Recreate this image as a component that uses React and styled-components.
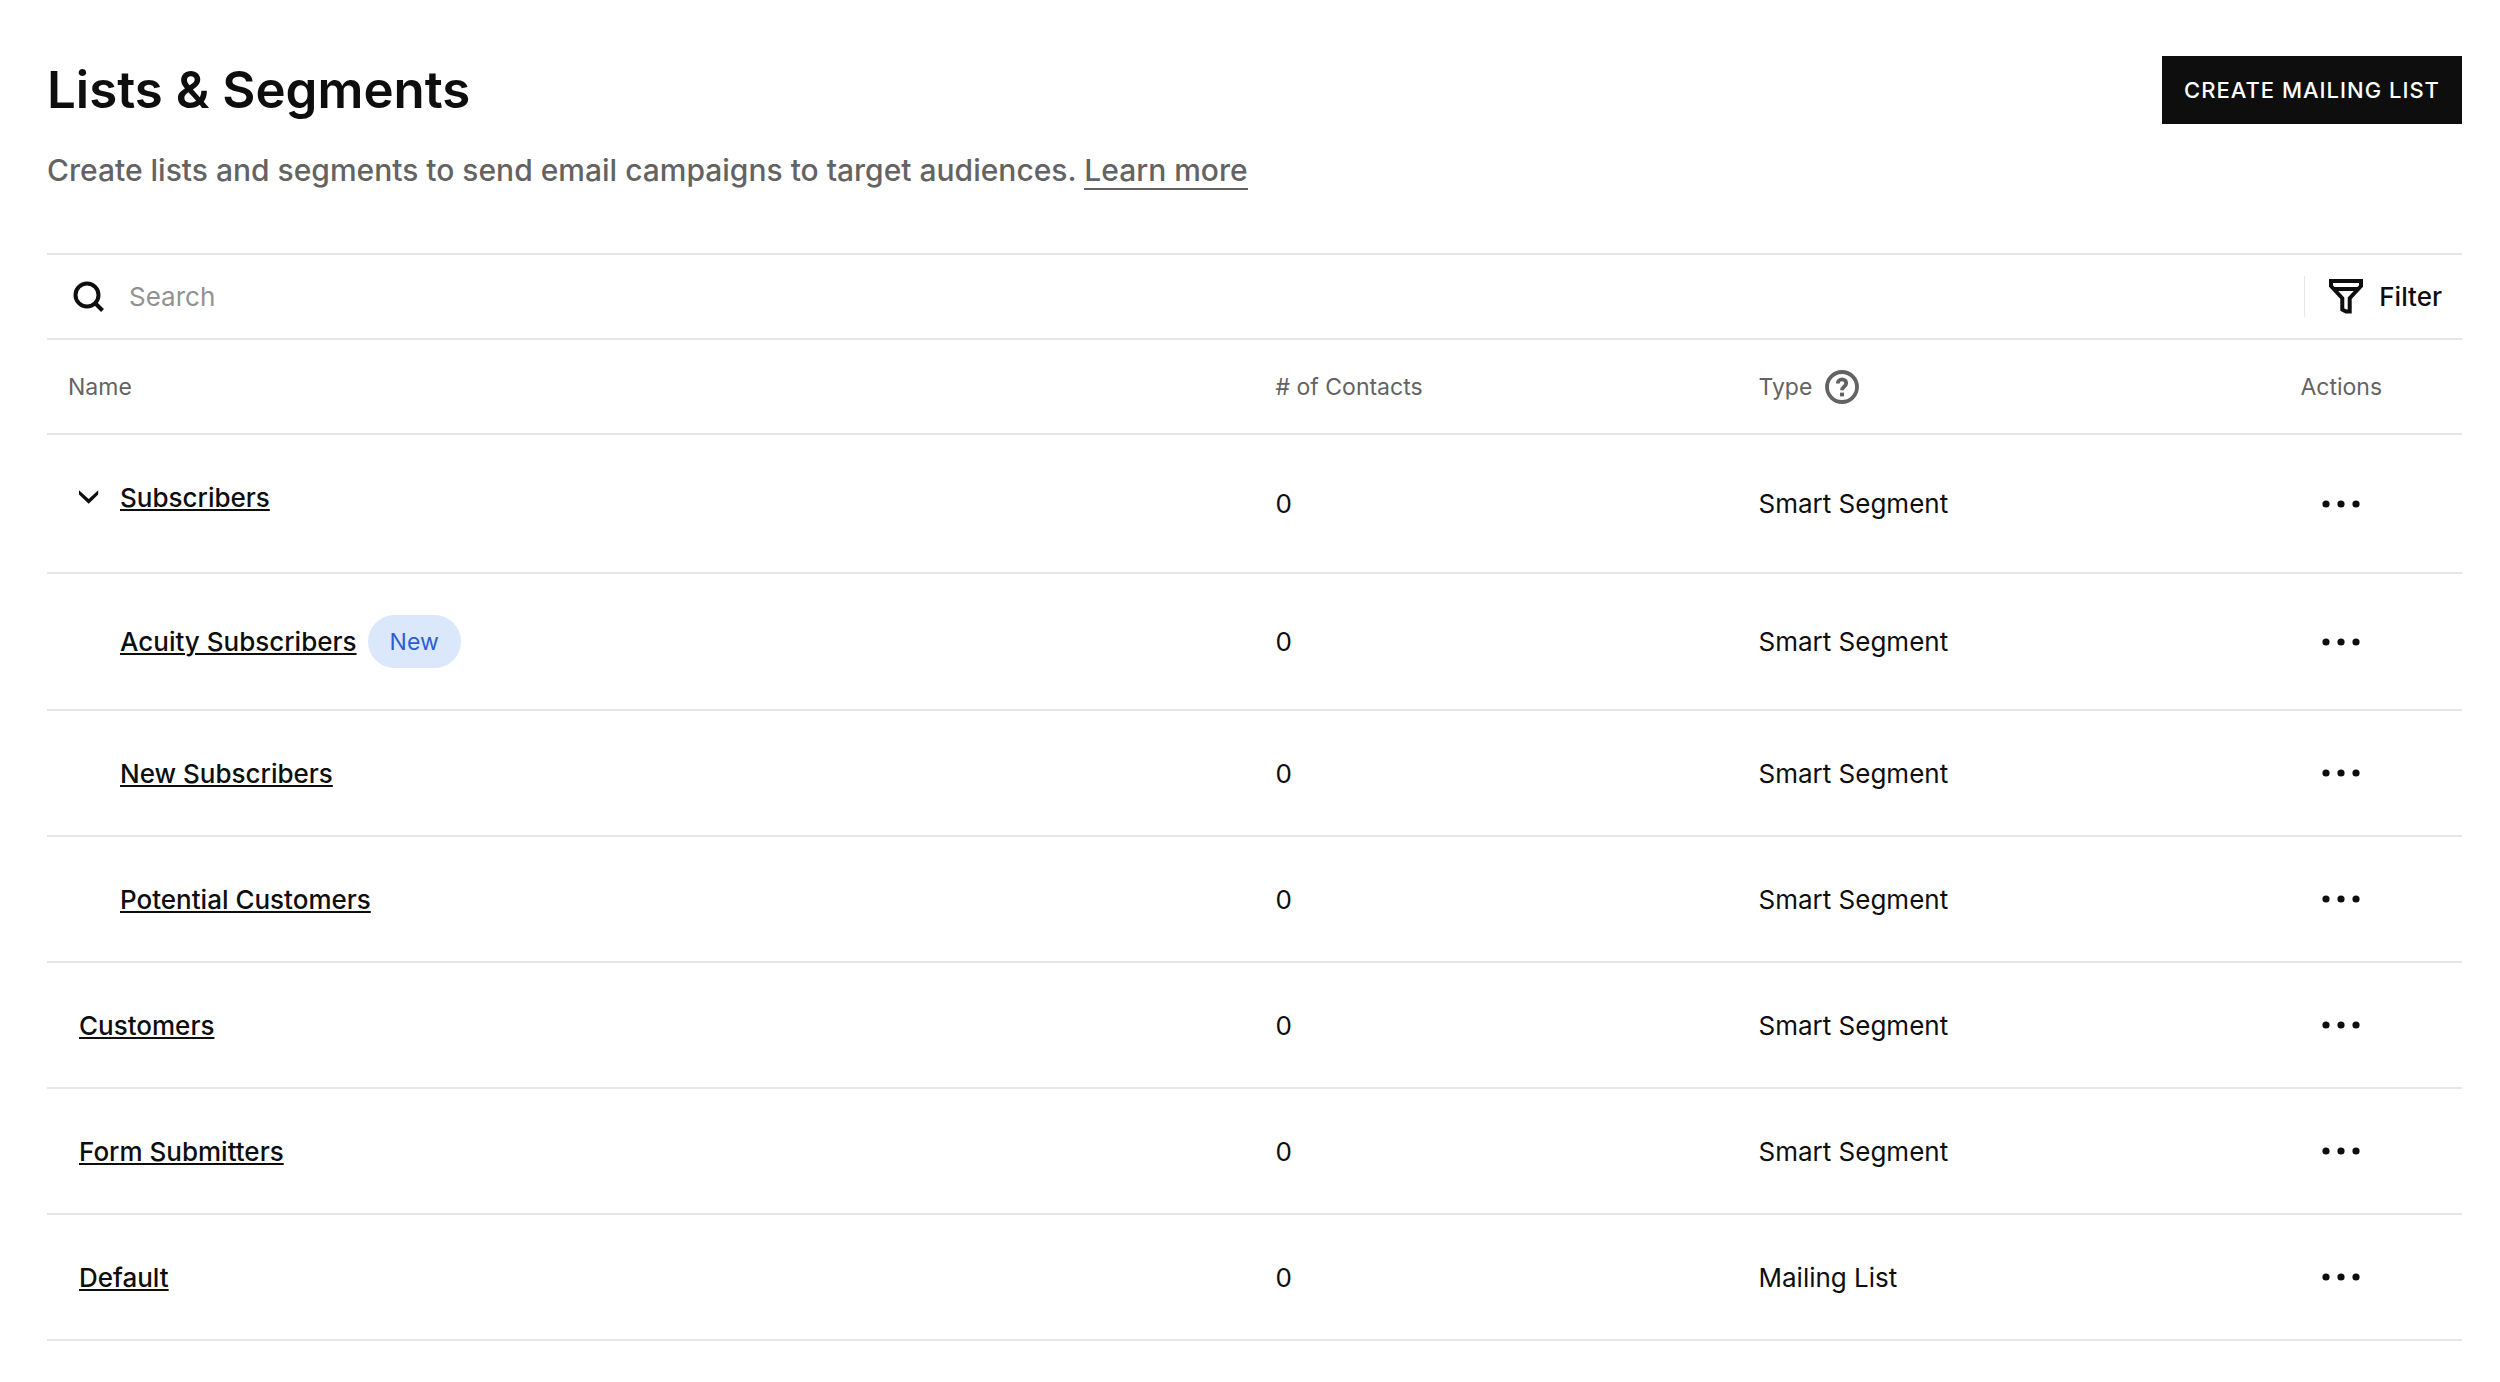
import React, { useState } from 'react';
import styled, { createGlobalStyle } from 'styled-components';

const segments = [
    { name: 'Subscribers', contacts: 0, type: 'Smart Segment', parent: true },
    { name: 'Acuity Subscribers', contacts: 0, type: 'Smart Segment', nested: true, isNew: true },
    { name: 'New Subscribers', contacts: 0, type: 'Smart Segment', nested: true },
    { name: 'Potential Customers', contacts: 0, type: 'Smart Segment', nested: true },
    { name: 'Customers', contacts: 0, type: 'Smart Segment' },
    { name: 'Form Submitters', contacts: 0, type: 'Smart Segment' },
    { name: 'Default', contacts: 0, type: 'Mailing List' },
];

function SearchGlyph() {
    return (
        <svg width="32" height="32" viewBox="0 0 32 32" fill="none" stroke="#0e0e0e" strokeWidth="4" aria-hidden="true">
            <circle cx="14" cy="14" r="11.5" />
            <path d="M22 22l7.5 7.5" />
        </svg>
    );
}

function FilterGlyph() {
    return (
        <svg width="34" height="35" viewBox="0 0 34 35" fill="none" stroke="#0e0e0e" strokeWidth="4" aria-hidden="true">
            <path d="M2 2h30v5L20.7 19.2v13.4h-3.6l-3.8-2V19.2L2 7z" />
            <path d="M4 10h26" />
        </svg>
    );
}

function HelpGlyph() {
    return (
        <svg width="34" height="34" viewBox="0 0 34 34" fill="none" stroke="#636363" strokeWidth="4" aria-hidden="true">
            <circle cx="17" cy="17" r="15" strokeWidth="3.8" />
            <path d="M12.8 13.6c0-2.6 1.7-4.2 4.2-4.2s4.2 1.6 4.2 3.9c0 3.4-4.2 3.3-4.2 7" strokeWidth="3.8" />
            <path d="M15 22.6h4v3.8h-4z" fill="#636363" stroke="none" />
        </svg>
    );
}

function ChevronGlyph() {
    return (
        <svg width="20" height="14" viewBox="0 0 20 14" aria-hidden="true">
            <path d="M0 0.2L9.7 9L19.2 0.2V4.6L9.7 13.8L0 4.6z" fill="#0e0e0e" />
        </svg>
    );
}

function DotsGlyph() {
    return (
        <svg width="38" height="8" viewBox="0 0 38 8" fill="#0e0e0e" aria-hidden="true">
            <circle cx="4" cy="4" r="3.6" />
            <circle cx="19" cy="4" r="3.6" />
            <circle cx="34" cy="4" r="3.6" />
        </svg>
    );
}

function App() {
    const [open, setOpen] = useState(true);
    const rows = segments.filter((segment) => open || !segment.nested);

    return (
        <Page>
            <GlobalStyle />
            <Header>
                <div>
                    <Title>Lists &amp; Segments</Title>
                    <Subtitle>
                        Create lists and segments to send email campaigns to target audiences.{' '}
                        <LearnMore href="#learn-more">Learn more</LearnMore>
                    </Subtitle>
                </div>
                <CreateButton type="button">Create mailing list</CreateButton>
            </Header>
            <Toolbar>
                <SearchLabel>
                    <SearchGlyph />
                    <SearchInput type="text" placeholder="Search" aria-label="Search" />
                </SearchLabel>
                <FilterButton type="button">
                    <FilterGlyph />
                    Filter
                </FilterButton>
            </Toolbar>
            <Table>
                <thead>
                    <tr>
                        <HeadCell $width="50%">Name</HeadCell>
                        <HeadCell $width="20%"># of Contacts</HeadCell>
                        <HeadCell $width="20%">
                            <TypeHead>
                                Type
                                <IconButton type="button" aria-label="About types">
                                    <HelpGlyph />
                                </IconButton>
                            </TypeHead>
                        </HeadCell>
                        <HeadCell $width="10%" $center>Actions</HeadCell>
                    </tr>
                </thead>
                <tbody>
                    {rows.map((segment) => (
                        <Row key={segment.name} $parent={segment.parent} $badge={segment.isNew}>
                            <Cell>
                                <NameBox $nested={segment.nested} $parent={segment.parent}>
                                    {segment.parent && (
                                        <IconButton
                                            type="button"
                                            aria-label="Toggle subscriber segments"
                                            aria-expanded={open}
                                            onClick={() => setOpen(!open)}
                                        >
                                            <ChevronGlyph />
                                        </IconButton>
                                    )}
                                    <NameLink href="#segment">{segment.name}</NameLink>
                                    {segment.isNew && <Badge>New</Badge>}
                                </NameBox>
                            </Cell>
                            <Cell>{segment.contacts}</Cell>
                            <Cell>{segment.type}</Cell>
                            <Cell $center>
                                <MenuButton type="button" aria-label={`Actions for ${segment.name}`}>
                                    <DotsGlyph />
                                </MenuButton>
                            </Cell>
                        </Row>
                    ))}
                </tbody>
            </Table>
        </Page>
    );
}

const GlobalStyle = createGlobalStyle`
    * {
        box-sizing: border-box;
    }

    body {
        margin: 0;
        background-color: #fff;
        color: #0e0e0e;
        font-family: Inter, "Liberation Sans", sans-serif;
    }

    button, input {
        font-family: inherit;
        color: inherit;
    }
`;

const Page = styled.main`
    padding: 56px 38px 40px 47px;
`;

const Header = styled.header`
    display: flex;
    align-items: flex-start;
    justify-content: space-between;
    padding-bottom: 63px;
`;

const Title = styled.h1`
    margin: 0;
    font-size: 51px;
    line-height: 68px;
    font-weight: 600;
`;

const Subtitle = styled.p`
    margin: 26px 0 0;
    font-size: 30px;
    line-height: 40px;
    font-weight: 500;
    color: #636363;
`;

const LearnMore = styled.a`
    color: inherit;
    text-decoration: none;
    border-bottom: 2px solid #636363;
`;

const CreateButton = styled.button`
    height: 68px;
    padding: 0 22px;
    border: none;
    background-color: #0e0e0e;
    color: #fff;
    font-size: 22px;
    font-weight: 500;
    letter-spacing: 1px;
    text-transform: uppercase;
    cursor: pointer;
`;

const Toolbar = styled.div`
    height: 87px;
    display: flex;
    align-items: center;
    border-top: 2px solid #e6e6e6;
    border-bottom: 2px solid #e6e6e6;
`;

const SearchLabel = styled.label`
    flex: 1;
    display: flex;
    align-items: center;
    gap: 24px;
    padding-left: 26px;
`;

const SearchInput = styled.input`
    flex: 1;
    height: 60px;
    padding: 0;
    border: none;
    outline: none;
    background: none;
    font-size: 26px;

    &::placeholder {
        color: #929292;
        opacity: 1;
    }
`;

const FilterButton = styled.button`
    height: 41px;
    display: flex;
    align-items: center;
    gap: 16px;
    padding: 0 20px 0 24px;
    border: none;
    border-left: 1px solid #e6e6e6;
    background: none;
    font-size: 26px;
    font-weight: 500;
    cursor: pointer;
`;

const Table = styled.table`
    width: 100%;
    table-layout: fixed;
    border-collapse: separate;
    border-spacing: 0;
`;

const HeadCell = styled.th`
    width: ${(props) => props.$width};
    height: 95px;
    padding: 0 21px;
    border-bottom: 2px solid #e6e6e6;
    color: #636363;
    font-size: 23px;
    font-weight: 400;
    text-align: ${(props) => (props.$center ? 'center' : 'left')};
`;

const TypeHead = styled.div`
    display: flex;
    align-items: center;
    gap: 13px;
`;

const Row = styled.tr`
    height: ${(props) => (props.$parent ? '139px' : props.$badge ? '137px' : '126px')};
`;

const Cell = styled.td`
    padding: 0 21px;
    border-bottom: 2px solid #e6e6e6;
    font-size: 26px;
    text-align: ${(props) => (props.$center ? 'center' : 'left')};
`;

const NameBox = styled.div`
    display: flex;
    align-items: center;
    padding-left: ${(props) => (props.$nested ? '52px' : '11px')};
    padding-bottom: ${(props) => (props.$parent ? '13px' : '0')};

    > button {
        margin-right: 21px;
    }
`;

const NameLink = styled.a`
    color: inherit;
    font-weight: 500;
    text-decoration: underline;
    text-decoration-thickness: 2px;
    text-underline-offset: 2px;
`;

const Badge = styled.span`
    height: 53px;
    display: flex;
    align-items: center;
    margin-left: 11px;
    padding: 0 22px;
    border-radius: 27px;
    background-color: #dbe7fb;
    color: #2a5fd3;
    font-size: 23px;
`;

const IconButton = styled.button`
    display: flex;
    padding: 0;
    border: none;
    background: none;
    cursor: pointer;
`;

const MenuButton = styled.button`
    display: inline-flex;
    padding: 15px 0;
    border: none;
    background: none;
    vertical-align: middle;
    cursor: pointer;
`;

export default App;
